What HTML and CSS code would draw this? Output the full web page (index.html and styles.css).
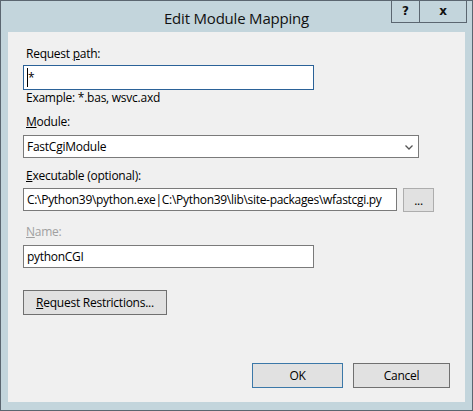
FILE: index.html
```html
<!DOCTYPE html>
<html>
<head>
<meta charset="utf-8">
<link rel="stylesheet" href="styles.css">
</head>
<body>
<div class="window">
  <div class="titlebar">
    <div class="spacer"></div>
    <div class="title">Edit Module Mapping</div>
    <div class="caption-btns">
      <span class="cbtn help">?</span><span class="cbtn close">x</span>
    </div>
  </div>
  <div class="content">
    <div class="form">
      <div class="label lbl-path">Request <u>p</u>ath:</div>
      <div class="field field-path focused"><span class="caret"></span>*</div>
      <div class="hint">Example: *.bas, wsvc.axd</div>
      <div class="label lbl-module"><u>M</u>odule:</div>
      <div class="select">
        <span>FastCgiModule</span>
        <svg class="chev" width="8" height="5" viewBox="0 0 8 5"><path d="M0.5 0.5 L4 4 L7.5 0.5" fill="none" stroke="#555" stroke-width="1.3"/></svg>
      </div>
      <div class="label lbl-exec"><u>E</u>xecutable (optional):</div>
      <div class="exec-row">
        <div class="field field-exec">C:\Python39\python.exe|C:\Python39\lib\site-packages\wfastcgi.py</div>
        <div class="btn btn-browse">...</div>
      </div>
      <div class="label lbl-name disabled"><u>N</u>ame:</div>
      <div class="field field-name">pythonCGI</div>
      <div class="btn btn-restrict"><u>R</u>equest Restrictions...</div>
    </div>
    <div class="footer">
      <div class="btn btn-ok">OK</div>
      <div class="btn btn-cancel">Cancel</div>
    </div>
  </div>
</div>
</body>
</html>
```

FILE: styles.css
```css
html, body {
  margin: 0;
  padding: 0;
}
body {
  font-family: "Open Sans", "Noto Sans", sans-serif;
  font-size: 12px;
  color: #000;
  background: #c3d5dc;
}
.window {
  width: 473px;
  height: 411px;
  box-sizing: border-box;
  border: 1px solid #5b6670;
  background: #c3d5dc;
  display: flex;
  flex-direction: column;
}
.titlebar {
  height: 31px;
  display: grid;
  grid-template-columns: 1fr auto 1fr;
  align-items: start;
}
.title {
  font-size: 15px;
  line-height: 20px;
  padding-top: 7px;
  color: #111;
  letter-spacing: -0.2px;
}
.caption-btns {
  justify-self: end;
  display: flex;
  margin-right: 5px;
  margin-top: -1px;
}
.cbtn {
  height: 23px;
  box-sizing: border-box;
  border: 1px solid #5b6670;
  border-top: none;
  font-family: "DejaVu Sans", sans-serif;
  font-weight: bold;
  font-size: 12px;
  line-height: 22px;
  text-align: center;
  color: #111;
}
.help {
  width: 29px;
}
.close {
  width: 47px;
  border-left: none;
}
.content {
  margin: 0 7px;
  height: 370px;
  background: #f0f0f0;
  display: flex;
  flex-direction: column;
  justify-content: space-between;
}
.form {
  padding: 14px 0 0 15px;
  display: flex;
  flex-direction: column;
  align-items: flex-start;
}
.label {
  line-height: 16px;
  padding-left: 3px;
  letter-spacing: -0.25px;
}
.disabled {
  color: #a0a0a0;
}
.hint {
  line-height: 16px;
  padding-left: 3px;
  margin-top: 0;
  letter-spacing: -0.25px;
}
.field {
  box-sizing: border-box;
  border: 1px solid #7a7a7a;
  background: #fff;
  padding: 0 3px;
  display: flex;
  align-items: center;
  letter-spacing: -0.3px;
  white-space: nowrap;
  overflow: hidden;
}
.field-path {
  width: 291px;
  height: 25px;
  margin-top: 3px;
}
.focused {
  border-color: #2b6298;
}
.caret {
  display: inline-block;
  width: 1px;
  height: 19px;
  background: #000;
}
.lbl-module {
  margin-top: 8px;
}
.select {
  box-sizing: border-box;
  width: 396px;
  height: 23px;
  margin-top: 5px;
  border: 1px solid #7a7a7a;
  background: #fff;
  display: flex;
  align-items: center;
  justify-content: space-between;
  padding: 0 5px 0 3px;
  letter-spacing: -0.25px;
}
.chev {
  margin-top: 1px;
}
.lbl-exec {
  margin-top: 10px;
}
.exec-row {
  display: flex;
  gap: 6px;
  margin-top: 4px;
}
.field-exec {
  width: 374px;
  height: 23px;
}
.btn {
  box-sizing: border-box;
  background: #e1e1e1;
  border: 1px solid #adadad;
  display: flex;
  align-items: center;
  justify-content: center;
  letter-spacing: -0.25px;
}
.btn-browse {
  width: 31px;
  height: 24px;
  border-color: #adadad;
}
.lbl-name {
  margin-top: 12px;
}
.field-name {
  width: 291px;
  height: 23px;
  margin-top: 5px;
}
.btn-restrict {
  width: 144px;
  height: 25px;
  margin-top: 22px;
  border-color: #707070;
}
.footer {
  display: flex;
  justify-content: flex-end;
  gap: 10px;
  padding: 0 15px 14px 0;
}
.btn-ok {
  width: 91px;
  height: 25px;
  border-color: #3b78a8;
}
.btn-cancel {
  width: 97px;
  height: 25px;
  border-color: #707070;
}
```
